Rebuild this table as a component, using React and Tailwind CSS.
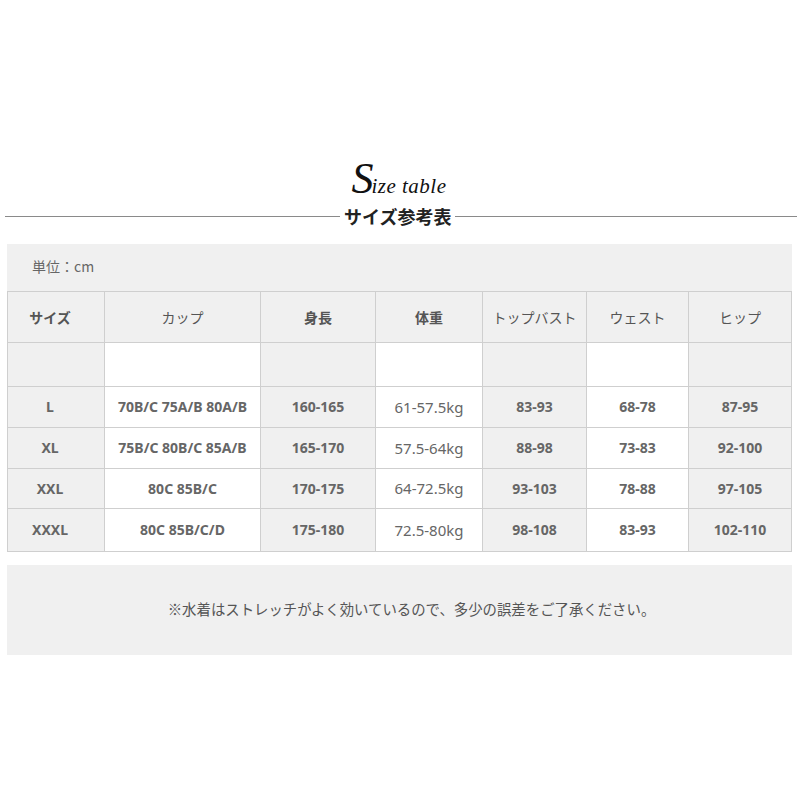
const cols = ["w-[97px]", "w-[156px]", "w-[115px]", "w-[107px]", "w-[104px]", "w-[102px]", "w-[103px]"];

const headers = [
  { t: "サイズ", bold: true },
  { t: "カップ" },
  { t: "身長", bold: true },
  { t: "体重", bold: true },
  { t: "トップバスト" },
  { t: "ウェスト" },
  { t: "ヒップ" },
];

const rows = [
  { h: "h-[41px]", cells: ["L", "70B/C 75A/B 80A/B", "160-165", "61-57.5kg", "83-93", "68-78", "87-95"] },
  { h: "h-[41px]", cells: ["XL", "75B/C 80B/C 85A/B", "165-170", "57.5-64kg", "88-98", "73-83", "92-100"] },
  { h: "h-[40px]", cells: ["XXL", "80C 85B/C", "170-175", "64-72.5kg", "93-103", "78-88", "97-105"] },
  { h: "h-[43px]", cells: ["XXXL", "80C 85B/C/D", "175-180", "72.5-80kg", "98-108", "83-93", "102-110"] },
];

function Cell({ i, h, children, bold, header }) {
  const bg = header ? "bg-[#f0f0f0]" : i % 2 === 0 ? "bg-[#f0f0f0]" : "bg-white";
  return (
    <div
      className={`${cols[i]} ${h} ${bg} border-r border-b border-[#cfcfcf] flex items-center justify-center shrink-0 ${i === 0 ? "pr-[12px]" : ""} ${bold ? "font-bold" : "font-normal text-[15px]"}`}
    >
      {children}
    </div>
  );
}

export default function App() {
  return (
    <div className="w-[800px] h-[800px] bg-white text-[#666] font-['Noto_Sans','Noto_Sans_CJK_JP',sans-serif]">
      <div className="pt-[157px] flex justify-center">
        <div className="flex items-end text-[#111] font-['Liberation_Serif','DejaVu_Serif',serif] italic leading-none ml-[-2px]">
          <span className="text-[44px] leading-none">S</span>
          <span className="text-[21px] mb-[4px] ml-[-2px] tracking-[0.5px]">ize table</span>
        </div>
      </div>
      <div className="flex items-center mt-[2px] h-[26px]">
        <div className="w-[335px] ml-[5px] h-px bg-[#8a8a8a]" />
        <div className="px-[4px] text-[18px] font-bold text-[#222] leading-none font-['Noto_Sans_CJK_JP',sans-serif]">
          サイズ参考表
        </div>
        <div className="flex-1 mr-[3px] h-px bg-[#8a8a8a]" />
      </div>

      <div className="mt-[15px] ml-[7px] w-[785px] bg-[#f0f0f0]">
        <div className="h-[47px] pl-[25px] pt-[15px] text-[14px] text-[#666] leading-none font-['Noto_Sans_CJK_JP',sans-serif]">
          単位：cm
        </div>
        <div className="border-l border-t border-[#cfcfcf] text-[14px] leading-none">
          <div className="flex text-[#555] font-['Noto_Sans_CJK_JP',sans-serif]">
            {headers.map((c, i) => (
              <Cell key={i} i={i} h="h-[51px]" bold={c.bold} header>
                <span className="text-[14px]">{c.t}</span>
              </Cell>
            ))}
          </div>
          <div className="flex">
            {cols.map((_, i) => (
              <Cell key={i} i={i} h="h-[44px]" />
            ))}
          </div>
          {rows.map((r, ri) => (
            <div key={ri} className="flex">
              {r.cells.map((c, i) => (
                <Cell key={i} i={i} h={r.h} bold={i !== 3}>
                  {c}
                </Cell>
              ))}
            </div>
          ))}
        </div>
      </div>

      <div className="mt-[13px] ml-[7px] w-[785px] h-[90px] bg-[#f0f0f0] flex items-center justify-center pl-[24px] text-[14.4px] text-[#555] font-['Noto_Sans_CJK_JP',sans-serif] pb-[2px]">
        ※水着はストレッチがよく効いているので、多少の誤差をご了承ください。
      </div>
    </div>
  );
}
